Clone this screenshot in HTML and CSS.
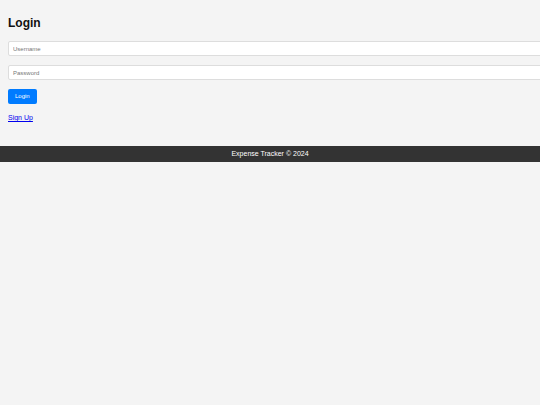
FILE: index.html
```html
<!DOCTYPE html>
<html lang="en">
<head>
<meta charset="utf-8">
<title>Login - Expense Tracker</title>
<link rel="stylesheet" href="styles.css">
</head>
<body>
<main class="container">
  <h2 class="title">Login</h2>
  <form class="login-form">
    <input class="field" type="text" placeholder="Username">
    <input class="field" type="password" placeholder="Password">
    <button class="btn" type="button">Login</button>
  </form>
  <p class="signup"><a href="#">Sign Up</a></p>
</main>
<footer class="footer">Expense Tracker © 2024</footer>
</body>
</html>
```

FILE: styles.css
```css
* { box-sizing: content-box; }
html, body {
  margin: 0;
  padding: 0;
  background: #f4f4f4;
  font-family: "Liberation Sans", Arial, sans-serif;
  overflow: hidden;
}
body { width: 540px; height: 405px; }
.container {
  padding: 16px 8px 0 8px;
}
.title {
  margin: 0 0 11px 0;
  font-size: 12px;
  line-height: 14px;
  font-weight: bold;
  color: #111;
}
.login-form {
  display: flex;
  flex-direction: column;
  align-items: flex-start;
  margin: 0;
}
.field {
  display: block;
  width: 100%;
  height: 13px;
  margin: 0 0 9px 0;
  padding: 0 4px;
  border: 1px solid #ddd;
  border-radius: 2px;
  background: #fff;
  font-family: "Liberation Sans", Arial, sans-serif;
  font-size: 6px;
  color: #333;
  outline: none;
}
.field::placeholder { color: #777; }
.btn {
  display: block;
  height: 15px;
  padding: 0 7px;
  margin: 0;
  border: none;
  border-radius: 2px;
  background: #007bff;
  color: #fff;
  font-family: "Liberation Sans", Arial, sans-serif;
  font-size: 6px;
  line-height: 15px;
}
.signup {
  margin: 10px 0 0 0;
  font-size: 7px;
  line-height: 8px;
}
.signup a { color: #0000ee; text-decoration: underline; }
.footer {
  margin-top: 24px;
  background: #333;
  color: #fff;
  text-align: center;
  font-size: 7px;
  line-height: 8px;
  padding: 4px 0;
}
```
